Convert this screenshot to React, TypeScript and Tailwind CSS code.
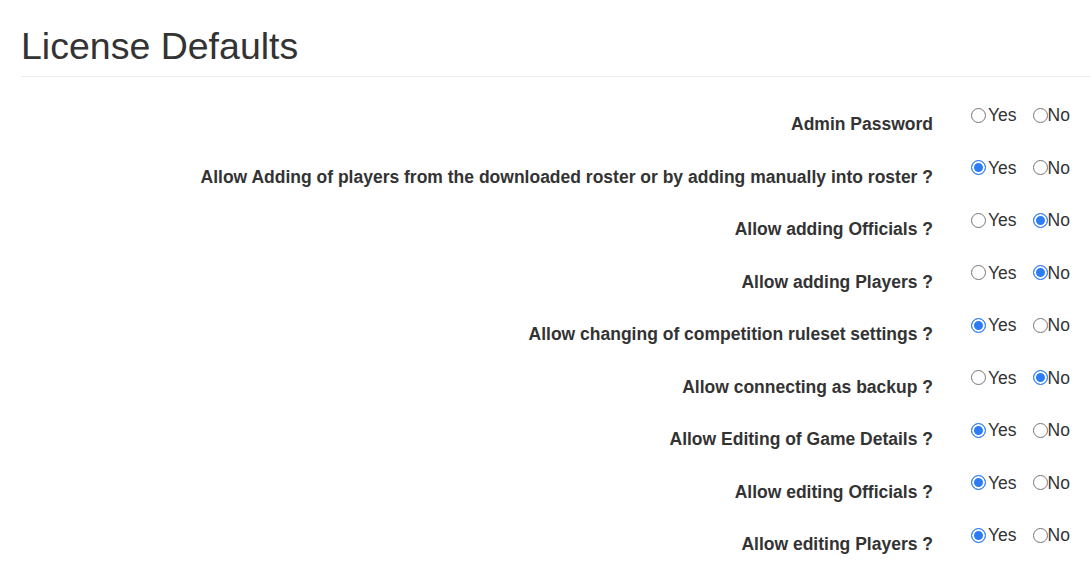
const rows: { label: string; yes: boolean }[] = [
  { label: "Admin Password", yes: false },
  { label: "Allow Adding of players from the downloaded roster or by adding manually into roster ?", yes: true },
  { label: "Allow adding Officials ?", yes: false },
  { label: "Allow adding Players ?", yes: false },
  { label: "Allow changing of competition ruleset settings ?", yes: true },
  { label: "Allow connecting as backup ?", yes: false },
  { label: "Allow Editing of Game Details ?", yes: true },
  { label: "Allow editing Officials ?", yes: true },
  { label: "Allow editing Players ?", yes: true },
];

// first row "Admin Password" has neither option selected
const noneSelected = new Set([0]);

const radioClass =
  "appearance-none m-0 w-[15px] h-[15px] shrink-0 rounded-full border border-[#767676] bg-white checked:border-[#2b7cf5] checked:bg-[#2b7cf5] checked:shadow-[inset_0_0_0_2px_#fff]";

export default function App() {
  return (
    <div className="pl-[21px] text-[#333] font-['Liberation_Sans',Arial,sans-serif] bg-white min-h-[572px]">
      <div className="border-b border-[#eee] pt-[26px] pb-[9px]">
        <h1 className="text-[37.5px] leading-[1.1] font-normal">License Defaults</h1>
      </div>
      <div className="pt-[23px]">
        {rows.map((row, i) => (
          <div key={i} className="flex h-[52.5px]">
            <label className="w-[912px] shrink-0 text-right font-bold text-[17.5px] leading-[20px] pt-[14px]">
              {row.label}
            </label>
            <div className="flex items-center h-[20px] mt-[5px] pl-[38px] text-[17.5px]">
              <label className="flex items-center">
                <input
                  type="radio"
                  name={`opt-${i}`}
                  defaultChecked={!noneSelected.has(i) && row.yes}
                  className={radioClass + " mr-[2px]"}
                />
                Yes
              </label>
              <label className="flex items-center ml-[16px]">
                <input
                  type="radio"
                  name={`opt-${i}`}
                  defaultChecked={!noneSelected.has(i) && !row.yes}
                  className={radioClass}
                />
                No
              </label>
            </div>
          </div>
        ))}
      </div>
    </div>
  );
}
